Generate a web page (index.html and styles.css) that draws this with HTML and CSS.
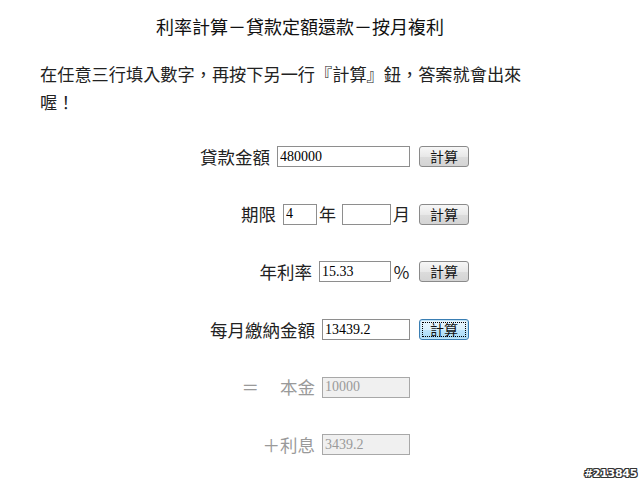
FILE: index.html
```html
<!DOCTYPE html>
<html lang="zh-Hant">
<head>
<meta charset="utf-8">
<title>利率計算</title>
<link rel="stylesheet" href="styles.css">
</head>
<body>
<div class="page">
  <h1 class="title">利率計算－貸款定額還款－按月複利</h1>
  <p class="intro">在任意三行填入數字，再按下另一行『計算』鈕，答案就會出來喔！</p>
  <div class="calc">
    <div class="row">
      <span class="label">貸款金額</span>
      <input class="field w-loan" type="text" value="480000">
      <button class="btn" type="button">計算</button>
    </div>
    <div class="row">
      <span class="label">期限</span>
      <input class="field w-year" type="text" value="4">
      <span class="unit unit-mid">年</span>
      <input class="field w-month" type="text" value="">
      <span class="unit">月</span>
      <button class="btn" type="button">計算</button>
    </div>
    <div class="row">
      <span class="label">年利率</span>
      <input class="field w-rate" type="text" value="15.33">
      <span class="unit">％</span>
      <button class="btn" type="button">計算</button>
    </div>
    <div class="row">
      <span class="label">每月繳納金額</span>
      <input class="field w-pay" type="text" value="13439.2">
      <button class="btn btn-focus" type="button">計算</button>
    </div>
    <div class="row row-result">
      <span class="label muted eq">＝</span>
      <span class="label muted">本金</span>
      <input class="field w-pay" type="text" value="10000" disabled>
    </div>
    <div class="row row-result">
      <span class="label muted">＋利息</span>
      <input class="field w-pay" type="text" value="3439.2" disabled>
    </div>
  </div>
  <div class="stamp">#213845</div>
</div>
</body>
</html>
```

FILE: styles.css
```css
html, body {
  margin: 0;
  padding: 0;
  background: #fff;
}

.page {
  position: relative;
  width: 640px;
  height: 486px;
  overflow: hidden;
  font-family: "Noto Sans CJK TC", "Noto Sans CJK SC", sans-serif;
  color: #222;
}

.title {
  margin: 0;
  padding: 14px 0 0 156px;
  font-size: 18px;
  font-weight: normal;
  line-height: 24px;
  color: #111;
}

.intro {
  margin: 22px 0 0 40px;
  width: 495px;
  font-size: 17.2px;
  line-height: 28px;
  color: #222;
}

.calc {
  margin-top: 12px;
  padding-right: 171px;
  display: flex;
  flex-direction: column;
}

.row {
  height: 57.6px;
  display: flex;
  align-items: center;
  justify-content: flex-end;
}

.row-result {
  padding-right: 59px;
}

.label {
  font-size: 17.5px;
  line-height: 22px;
  margin-right: 7px;
  color: #222;
}

.muted {
  color: #9a9a9a;
}

.eq {
  margin-right: 21px;
}

.field {
  box-sizing: border-box;
  height: 21px;
  margin: 0;
  padding: 0 2px;
  border: 1px solid #8e8e8e;
  font-family: "Liberation Serif", serif;
  font-size: 14px;
  color: #000;
  background: #fff;
}

.field:disabled {
  background: #f0f0f0;
  border-color: #a8a8a8;
  color: #9a9a9a;
}

.w-loan { width: 133px; }
.w-year { width: 34px; }
.w-month { width: 49px; }
.w-rate { width: 72px; }
.w-pay { width: 88px; }

.unit {
  font-size: 17px;
  line-height: 22px;
  margin-left: 2px;
  color: #222;
}

.unit-mid {
  margin-right: 6px;
}

.btn {
  box-sizing: border-box;
  width: 50px;
  height: 21px;
  margin: 0 0 0 9px;
  padding: 0;
  border: 1px solid #8a8a8a;
  border-radius: 3px;
  background: linear-gradient(#f7f7f7, #e8e8e8 50%, #dcdcdc 51%, #d4d4d4);
  font-family: "Noto Sans CJK TC", sans-serif;
  font-size: 14px;
  line-height: 19px;
  color: #111;
}

.btn-focus {
  border-color: #3a7eb3;
  box-shadow: inset 0 0 0 1px #bfe3f7;
  background: linear-gradient(#eaf6fd, #d9f0fc 50%, #bee6fd 51%, #a7d9f5);
  outline: 1px dotted #000;
  outline-offset: -4px;
}

.stamp {
  position: absolute;
  right: 3px;
  bottom: 6px;
  font-family: "DejaVu Sans", sans-serif;
  font-weight: bold;
  font-size: 11px;
  line-height: 12px;
  letter-spacing: -0.3px;
  color: #fff;
  text-shadow: 1px 0 0 #333, -1px 0 0 #333, 0 1px 0 #333, 0 -1px 0 #333,
    1px 1px 0 #333, -1px -1px 0 #333, 1px -1px 0 #333, -1px 1px 0 #333;
}
```
